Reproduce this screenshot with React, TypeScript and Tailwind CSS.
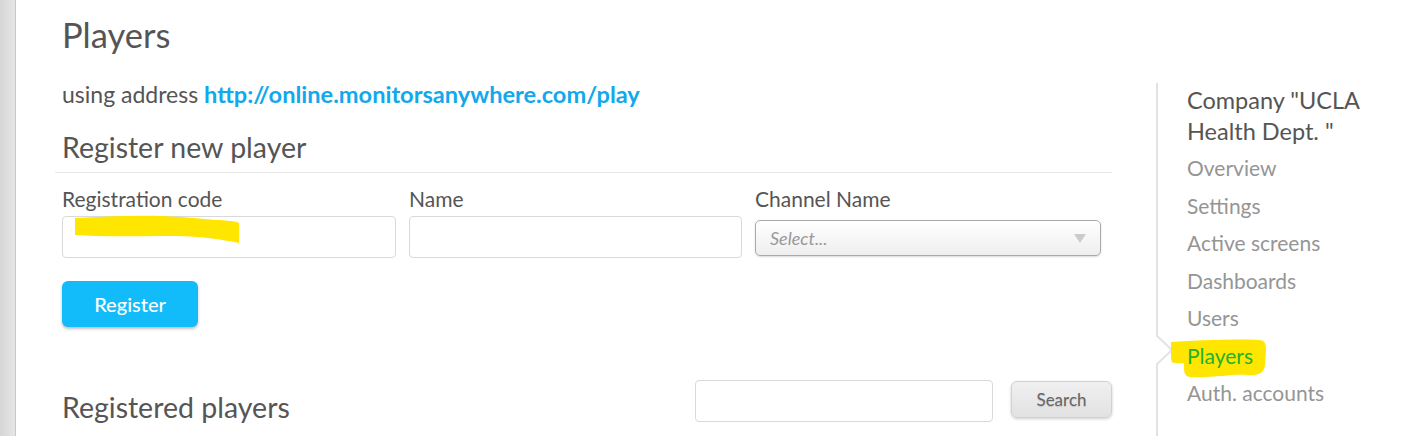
import React from 'react';

const navItems = ['Overview', 'Settings', 'Active screens', 'Dashboards', 'Users', 'Players', 'Auth. accounts'];

const Highlight: React.FC<{ className: string; d: string; w: number; h: number }> = ({ className, d, w, h }) => (
  <svg className={className} width={w} height={h} viewBox={`0 0 ${w} ${h}`} fill="#ffe600">
    <path d={d} />
  </svg>
);

const App: React.FC = () => {
  return (
    <div className="flex h-[436px] w-[1402px] overflow-hidden bg-white text-[#555] font-['Lato',sans-serif]">
      <div className="w-[16px] shrink-0 bg-gradient-to-r from-[#d6d6d6] to-[#e6e6e6] border-r border-[#c8c8c8]" />

      <main className="w-[1096px] shrink-0 pl-[46px] pt-[14px]">
        <h1 className="text-[34.5px] leading-[42px] text-[#555]">Players</h1>

        <p className="mt-[24px] text-[23px] leading-[28px]">
          using address{' '}
          <a className="font-bold text-[23.6px] text-[#11a9ec]" href="#">http://online.monitorsanywhere.com/play</a>
        </p>

        <h2 className="mt-[21px] text-[28.5px] leading-[36px]">Register new player</h2>
        <hr className="mt-[7px] -ml-[7px] border-t border-[#e7e7e7]" />

        <div className="mt-[13px] grid grid-cols-[334px_333px_1fr] gap-[13px]">
          <div className="relative">
            <label className="block text-[21px] leading-[26px]">Registration code</label>
            <input className="mt-[4px] h-[42px] w-full rounded-[4px] border border-[#d9d9d9]" />
            <Highlight
              className="absolute left-[12px] top-[29px]"
              w={166}
              h={28}
              d="M1 3 C40 1 75 -1 120 3 C148 6 160 5 165 8 L165 28 C150 25 130 21 100 21 C60 21 30 22 1 20 Z"
            />
          </div>
          <div>
            <label className="block text-[21px] leading-[26px]">Name</label>
            <input className="mt-[4px] h-[42px] w-full rounded-[4px] border border-[#d9d9d9]" />
          </div>
          <div>
            <label className="block text-[21px] leading-[26px]">Channel Name</label>
            <div className="mt-[8px] flex h-[36px] w-[346px] items-center justify-between rounded-[5px] border border-[#aaa] bg-gradient-to-b from-white to-[#eee] px-[14px] shadow-[0_1px_2px_rgba(0,0,0,0.15)]">
              <span className="italic text-[18px] text-[#999]">Select...</span>
              <svg width="12" height="9" viewBox="0 0 12 9"><path d="M0 0 L12 0 L6 9 Z" fill="#ccc" /></svg>
            </div>
          </div>
        </div>

        <button className="mt-[23px] h-[46px] w-[136px] rounded-[6px] bg-[#12bcfb] text-[20px] font-medium text-white shadow-[0_2px_3px_rgba(0,0,0,0.25)]">
          Register
        </button>

        <div className="mt-[53px] flex items-start justify-between">
          <h2 className="mt-[9px] text-[28.5px] leading-[36px]">Registered players</h2>
          <div className="flex items-start gap-[18px]">
            <input className="h-[42px] w-[298px] rounded-[4px] border border-[#d9d9d9]" />
            <button className="mt-[1px] h-[37px] w-[101px] rounded-[6px] border border-[#d2d2d2] bg-gradient-to-b from-[#f0f0f0] to-[#e2e2e2] text-[17px] text-[#666] shadow-[0_1px_3px_rgba(0,0,0,0.2)] [text-shadow:0_1px_1px_rgba(0,0,0,0.15)]">
              Search
            </button>
          </div>
        </div>
      </main>

      <aside className="relative ml-[44px] mt-[83px] w-[240px] border-l-2 border-[#e2e2e2] pl-[29px]">
        <div className="absolute left-[-2px] top-[252px] h-[30px] w-[20px]">
          <svg width="20" height="30" viewBox="0 0 20 30">
            <path d="M0 0 L16 15 L0 30" fill="white" stroke="#e2e2e2" strokeWidth="2" />
          </svg>
        </div>
        <h3 className="pt-[2px] text-[23.5px] leading-[31px] text-[#555]">Company "UCLA Health Dept. "</h3>
        <ul className="mt-[2px]">
          {navItems.map((item) => (
            <li key={item} className="relative h-[37.5px] text-[21px] leading-[37px]">
              {item === 'Players' && (
                <Highlight
                  className="absolute left-[-16px] top-[2px]"
                  w={96}
                  h={39}
                  d="M0 3 C30 1 60 0 88 1 C94 1 95 5 95 11 L94 26 C93 34 88 37 76 36 C60 35 45 39 20 38 C15 38 13 35 13 29 L13 24 L3 24 C0 24 0 20 0 16 Z"
                />
              )}
              <span className={item === 'Players' ? 'relative text-[#22b22f]' : 'text-[#959595]'}>{item}</span>
            </li>
          ))}
        </ul>
      </aside>
    </div>
  );
};

export default App;
